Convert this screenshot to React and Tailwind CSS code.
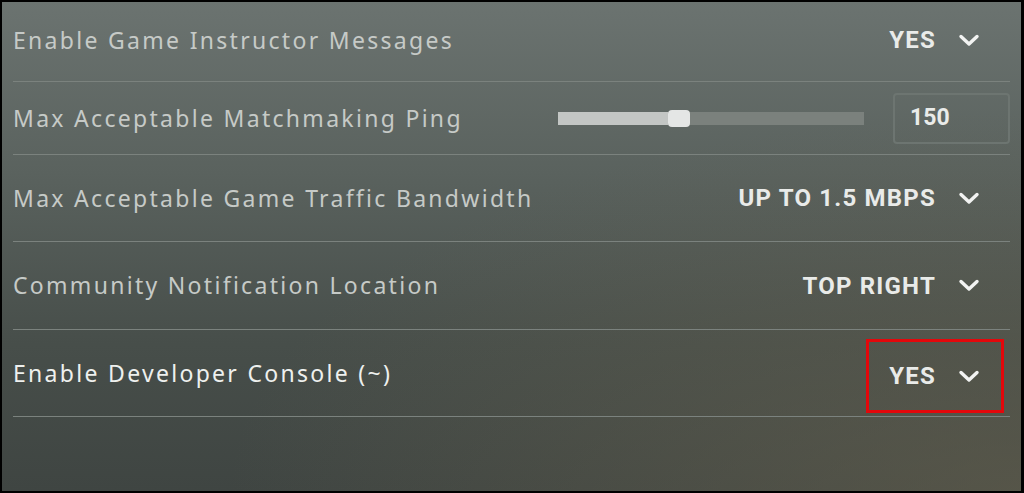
import { useState } from 'react';

const labelFont = { fontFamily: '"Noto Sans", "Open Sans", sans-serif' };
const valueFont = { fontFamily: 'Roboto, "Liberation Sans", sans-serif' };

function Chevron() {
  return (
    <svg width="22" height="13" viewBox="0 0 22 13" fill="none" className="shrink-0">
      <polyline points="3,2.5 11,10 19,2.5" stroke="#f2f3f2" strokeWidth="3.4" strokeLinecap="round" strokeLinejoin="round" />
    </svg>
  );
}

function Value({ children }) {
  return (
    <span className="text-[24px] font-bold tracking-[0.05em] text-[#e9ebe9]" style={valueFont}>{children}</span>
  );
}

function Dropdown({ value }) {
  return (
    <div className="flex items-center gap-[22px] pr-[30px]">
      <Value>{value}</Value>
      <Chevron />
    </div>
  );
}

function Label({ children, bright }) {
  return (
    <span
      className={`text-[23px] tracking-[0.1em] ${bright ? 'text-[#eef0ee]' : 'text-[#c6cac7]'}`}
      style={labelFont}
    >
      {children}
    </span>
  );
}

export default function App() {
  const [ping] = useState(150);
  const pct = 36;

  return (
    <div className="h-[493px] w-[1024px] overflow-hidden bg-black pb-[2px] pl-[2px] pr-[3px] pt-[2px]">
      <div className="h-full w-full bg-[radial-gradient(ellipse_at_100%_100%,rgba(104,98,78,0.55),transparent_55%),linear-gradient(180deg,#6b7370_0%,#5a625e_35%,#474e4a_70%,#3f4542_100%)] px-[11px]">
        <div className="flex h-[80px] items-center justify-between border-b border-[#7b827e] pb-[3px]">
          <Label>Enable Game Instructor Messages</Label>
          <Dropdown value="YES" />
        </div>

        <div className="flex h-[73px] items-center border-b border-[#7b827e]">
          <Label>Max Acceptable Matchmaking Ping</Label>
          <div className="ml-auto flex items-center gap-[29px]">
            <div className="relative h-[13px] w-[306px] bg-[#7b817d]">
              <div className="h-full bg-[#c3c6c4]" style={{ width: `${pct}%` }} />
              <div className="absolute top-[-2px] h-[17px] w-[22px] rounded-[4px] bg-[#e4e6e5]" style={{ left: `${pct}%` }} />
            </div>
            <div className="flex h-[51px] w-[117px] items-center rounded-[4px] border-2 border-[#6d7571] pl-[15px]">
              <span className="text-[23px] font-bold text-[#e9ebe9]" style={valueFont}>{ping}</span>
            </div>
          </div>
        </div>

        <div className="flex h-[87px] items-center justify-between border-b border-[#7b827e]">
          <Label>Max Acceptable Game Traffic Bandwidth</Label>
          <Dropdown value="UP TO 1.5 MBPS" />
        </div>

        <div className="flex h-[88px] items-center justify-between border-b border-[#7b827e]">
          <Label>Community Notification Location</Label>
          <Dropdown value="TOP RIGHT" />
        </div>

        <div className="flex h-[87px] items-center justify-between border-b border-[#7b827e]">
          <Label bright>Enable Developer Console (~)</Label>
          <div className="mr-[6px] mt-[6px] flex h-[74px] items-center border-[3px] border-[#e3070b] pl-[20px]">
            <div className="flex items-center gap-[22px] pr-[21px]">
              <Value>YES</Value>
              <Chevron />
            </div>
          </div>
        </div>
      </div>
    </div>
  );
}
